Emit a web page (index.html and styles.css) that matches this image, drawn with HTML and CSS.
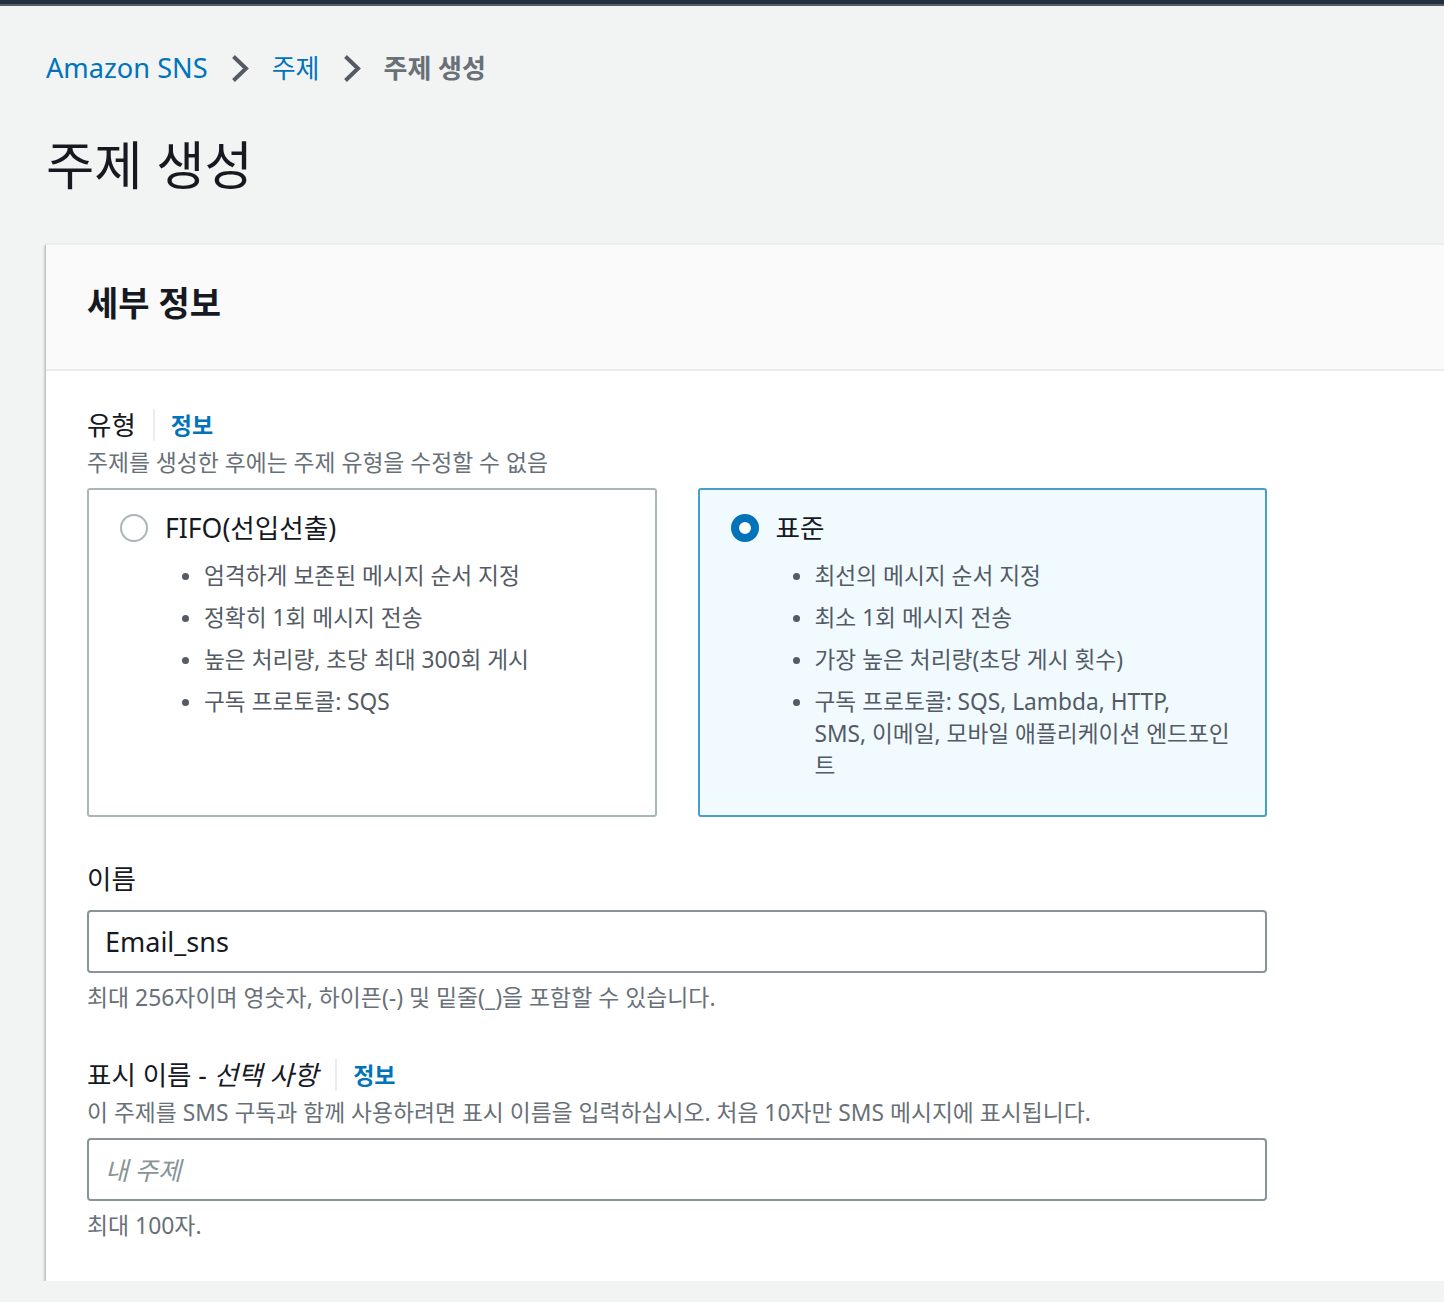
FILE: index.html
```html
<!DOCTYPE html>
<html lang="ko">
<head>
<meta charset="utf-8">
<title>주제 생성</title>
<link rel="stylesheet" href="styles.css">
</head>
<body>
<div class="topbar"></div>
<main class="page">
  <nav class="breadcrumbs">
    <a class="crumb crumb-latin" href="#">Amazon SNS</a>
    <svg class="chev" viewBox="0 0 18 29" aria-hidden="true"><path d="M2.5 2.5 L15 14.5 L2.5 26.5" fill="none" stroke="#545b64" stroke-width="4"/></svg>
    <a class="crumb" href="#">주제</a>
    <svg class="chev" viewBox="0 0 18 29" aria-hidden="true"><path d="M2.5 2.5 L15 14.5 L2.5 26.5" fill="none" stroke="#545b64" stroke-width="4"/></svg>
    <span class="crumb current">주제 생성</span>
  </nav>
  <h1 class="title">주제 생성</h1>

  <section class="card">
    <header class="card-header"><h2>세부 정보</h2></header>
    <div class="card-body">
      <div class="field">
        <div class="label-row"><span class="label">유형</span><span class="sep"></span><a class="info" href="#">정보</a></div>
        <p class="desc">주제를 생성한 후에는 주제 유형을 수정할 수 없음</p>
        <div class="tiles">
          <div class="tile">
            <div class="tile-head"><span class="radio"></span><span class="tile-title">FIFO(선입선출)</span></div>
            <ul class="tile-list">
              <li>엄격하게 보존된 메시지 순서 지정</li>
              <li>정확히 1회 메시지 전송</li>
              <li>높은 처리량, 초당 최대 300회 게시</li>
              <li>구독 프로토콜: SQS</li>
            </ul>
          </div>
          <div class="tile selected">
            <div class="tile-head"><span class="radio checked"></span><span class="tile-title">표준</span></div>
            <ul class="tile-list">
              <li>최선의 메시지 순서 지정</li>
              <li>최소 1회 메시지 전송</li>
              <li>가장 높은 처리량(초당 게시 횟수)</li>
              <li><span>구독 프로토콜: SQS, Lambda, HTTP,<br>SMS, 이메일, 모바일 애플리케이션 엔드포인<br>트</span></li>
            </ul>
          </div>
        </div>
      </div>

      <div class="field field-gap">
        <div class="label-row"><span class="label">이름</span></div>
        <input class="input input-name" type="text" value="Email_sns">
        <p class="hint">최대 256자이며 영숫자, 하이픈(-) 및 밑줄(_)을 포함할 수 있습니다.</p>
      </div>

      <div class="field field-gap2">
        <div class="label-row"><span class="label">표시 이름 - <em>선택 사항</em></span><span class="sep"></span><a class="info" href="#">정보</a></div>
        <p class="desc">이 주제를 SMS 구독과 함께 사용하려면 표시 이름을 입력하십시오. 처음 10자만 SMS 메시지에 표시됩니다.</p>
        <input class="input input-display" type="text" placeholder="내 주제">
        <p class="hint">최대 100자.</p>
      </div>
    </div>
  </section>
</main>
</body>
</html>
```

FILE: styles.css
```css
html, body {
  margin: 0;
  padding: 0;
}

body {
  background: #f2f3f3;
  font-family: "Noto Sans", "Noto Sans CJK KR", sans-serif;
  color: #16191f;
  overflow: hidden;
}

.topbar {
  height: 4px;
  background: #232f3e;
  border-bottom: 2px solid #545b64;
}

.page {
  padding: 44px 0 0 46px;
}

.breadcrumbs {
  display: flex;
  align-items: center;
  gap: 23px;
  height: 36px;
  font-size: 26px;
  line-height: 36px;
}

.crumb {
  color: #0073bb;
  text-decoration: none;
}

.crumb-latin {
  font-size: 27.2px;
}

.crumb.current {
  color: #687078;
  font-weight: 700;
}

.chev {
  width: 18px;
  height: 29px;
  flex: none;
}

.title {
  margin: 49px 0 0;
  font-size: 52.5px;
  line-height: 60px;
  font-weight: 400;
  color: #16191f;
}

.card {
  margin-top: 48px;
  margin-right: -80px;
  background: #ffffff;
  border-top: 2px solid #eaeded;
  box-shadow: 0 2px 2px 0 rgba(0, 28, 36, 0.3),
              2px 2px 2px 0 rgba(0, 28, 36, 0.15),
              -2px 2px 2px 0 rgba(0, 28, 36, 0.15);
}

.card-header {
  background: #fafafa;
  border-bottom: 2px solid #eaeded;
  padding: 38px 41px 46px;
}

.card-header h2 {
  margin: 0;
  font-size: 34px;
  line-height: 40px;
  font-weight: 700;
  color: #16191f;
}

.card-body {
  padding: 38px 41px 39px;
}

.field {
  max-width: 1180px;
}

.field-gap {
  margin-top: 46px;
}

.field-gap2 {
  margin-top: 45px;
}

.label-row {
  display: flex;
  align-items: center;
  height: 32px;
}

.label {
  font-size: 26.5px;
  line-height: 32px;
  color: #16191f;
}

.label em {
  font-style: italic;
}

.sep {
  width: 2px;
  height: 32px;
  background: #eaeded;
  margin: 0 16px 0 17px;
}

.info {
  font-size: 23px;
  line-height: 32px;
  font-weight: 700;
  color: #0073bb;
  text-decoration: none;
}

.desc {
  margin: 6px 0 0;
  font-size: 22.8px;
  line-height: 32px;
  color: #687078;
}

.tiles {
  margin-top: 9px;
  display: grid;
  grid-template-columns: 1fr 1fr;
  gap: 41px;
}

.tile {
  border: 2px solid #aab7b8;
  border-radius: 3px;
  padding: 22px 12px 33px 31px;
  background: #ffffff;
}

.tile.selected {
  border-color: #44a0cb;
  background: #f1faff;
}

.tile-head {
  display: flex;
  align-items: center;
  gap: 17px;
  height: 32px;
}

.radio {
  flex: none;
  width: 28px;
  height: 28px;
  box-sizing: border-box;
  border: 2.5px solid #aab7b8;
  border-radius: 50%;
  background: #ffffff;
}

.radio.checked {
  border: 8px solid #0073bb;
}

.tile-title {
  font-size: 26.6px;
  line-height: 32px;
  color: #16191f;
}

.tile-list {
  list-style: none;
  margin: 16px 0 0;
  padding: 0 0 0 62px;
}

.tile-list li {
  display: flex;
  gap: 15px;
  font-size: 22.7px;
  line-height: 32px;
  color: #545b64;
  white-space: nowrap;
}

.tile-list li + li {
  margin-top: 10px;
}

.tile-list li::before {
  content: "";
  flex: none;
  width: 7px;
  height: 7px;
  border-radius: 50%;
  background: #545b64;
  margin-top: 13px;
}

.input {
  display: block;
  width: 100%;
  height: 63px;
  box-sizing: border-box;
  margin: 0;
  border: 2px solid #879596;
  border-radius: 4px;
  padding: 0 16px;
  background: #ffffff;
  font-family: inherit;
  color: #16191f;
  outline: none;
}

.input-name {
  margin-top: 15px;
  font-size: 27px;
}

.input-display {
  margin-top: 9px;
  font-size: 25.3px;
}

.input-display::placeholder {
  font-style: italic;
  color: #879596;
}

.hint {
  margin: 9px 0 0;
  font-size: 22.9px;
  line-height: 32px;
  color: #687078;
}
```
